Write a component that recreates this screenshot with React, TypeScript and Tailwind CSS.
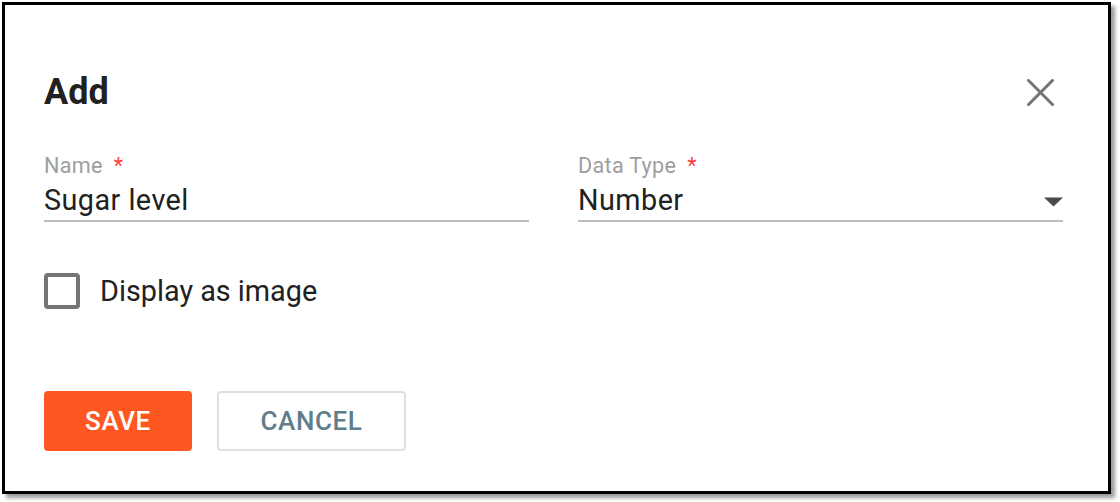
import React from "react";

function CloseIcon() {
  return (
    <svg width="27" height="27" viewBox="0 0 27 27" fill="none">
      <path d="M1.5 1.5L25.5 25.5M25.5 1.5L1.5 25.5" stroke="#757575" strokeWidth="3" strokeLinecap="square" />
    </svg>
  );
}

function Arrow() {
  return (
    <svg width="19" height="10" viewBox="0 0 19 10">
      <path d="M0 0.5L9.5 9.5L19 0.5Z" fill="#4a4a4a" />
    </svg>
  );
}

function Field({ label, value, select }: { label: string; value: string; select?: boolean }) {
  return (
    <div className="flex flex-col">
      <div className="flex text-[21.6px] leading-[21.6px] tracking-[0.3px] text-[#9e9e9e]">
        <span>{label}</span>
        <span className="ml-[11px] text-[#f44336]">*</span>
      </div>
      <div className="mt-[9px] flex items-center justify-between border-b-2 border-[#bdbdbd] pb-[6px]">
        <span className="text-[28.8px] leading-[28.8px] tracking-[0.45px] text-[#212121]">{value}</span>
        {select && (
          <span className="mt-[5px] flex">
            <Arrow />
          </span>
        )}
      </div>
    </div>
  );
}

export default function App() {
  return (
    <div className="h-[502px] w-[1120px] bg-white pl-[2px] pt-[2px]" style={{ fontFamily: "Roboto, 'Liberation Sans', sans-serif" }}>
      <div className="flex h-[492px] w-[1109px] flex-col border-[3px] border-black bg-white pl-[39px] pr-[45px] pt-[69px] shadow-[4px_4px_4px_rgba(0,0,0,0.4)]">
        <div className="flex h-[36px] items-center justify-between">
          <h2 className="text-[36px] font-bold leading-[36px] text-[#212121]">Add</h2>
          <button className="mr-[9px] flex">
            <CloseIcon />
          </button>
        </div>
        <div className="mt-[45px] grid grid-cols-2 gap-x-[49px]">
          <Field label="Name" value="Sugar level" />
          <Field label="Data Type" value="Number" select />
        </div>
        <label className="mt-[51px] flex items-center">
          <span className="h-[36px] w-[36px] rounded-[4px] border-[4px] border-[#757575]" />
          <span className="ml-[20px] text-[28.8px] leading-[28.8px] text-[#212121]">Display as image</span>
        </label>
        <div className="mt-[82px] flex gap-[25px]">
          <button className="flex h-[60px] w-[148px] items-center justify-center rounded-[4px] bg-[#ff5722] text-[26px] font-medium leading-[26px] tracking-[0.6px] text-white">
            SAVE
          </button>
          <button className="flex h-[60px] w-[189px] items-center justify-center rounded-[4px] border-2 border-[#e0e0e0] bg-white text-[26px] font-medium leading-[26px] tracking-[0.6px] text-[#607d8b]">
            CANCEL
          </button>
        </div>
      </div>
    </div>
  );
}
